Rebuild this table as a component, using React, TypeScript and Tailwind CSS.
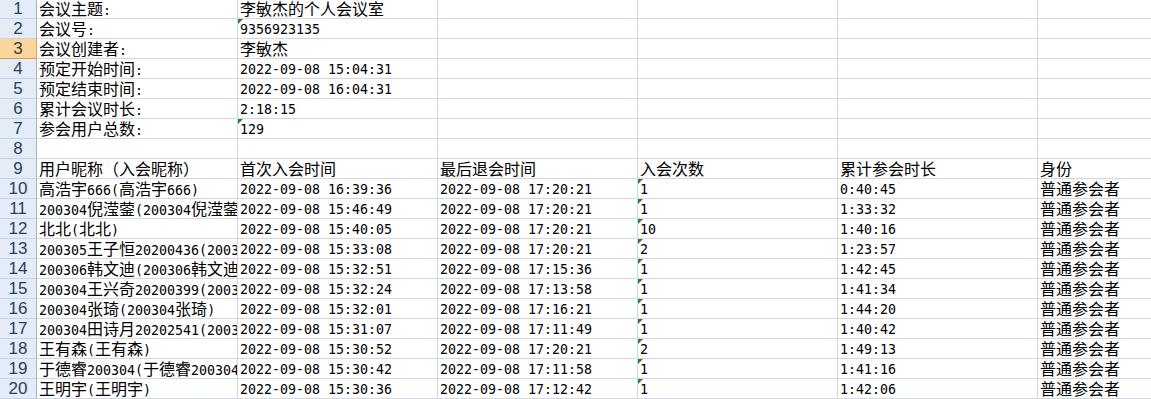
const head = ['用户昵称（入会昵称）', '首次入会时间', '最后退会时间', '入会次数', '累计参会时长', '身份'];

type Row = { cells: string[]; marks?: number[] };

const people: [string, string, string, string, string][] = [
  ['高浩宇666(高浩宇666)', '16:39:36', '17:20:21', '1', '0:40:45'],
  ['200304倪滢蓥(200304倪滢蓥)', '15:46:49', '17:20:21', '1', '1:33:32'],
  ['北北(北北)', '15:40:05', '17:20:21', '10', '1:40:16'],
  ['200305王子恒20200436(200305王子恒20200436)', '15:33:08', '17:20:21', '2', '1:23:57'],
  ['200306韩文迪(200306韩文迪)', '15:32:51', '17:15:36', '1', '1:42:45'],
  ['200304王兴奇20200399(200304王兴奇20200399)', '15:32:24', '17:13:58', '1', '1:41:34'],
  ['200304张琦(200304张琦)', '15:32:01', '17:16:21', '1', '1:44:20'],
  ['200304田诗月20202541(200304田诗月20202541)', '15:31:07', '17:11:49', '1', '1:40:42'],
  ['王有森(王有森)', '15:30:52', '17:20:21', '2', '1:49:13'],
  ['于德睿200304(于德睿200304)', '15:30:42', '17:11:58', '1', '1:41:16'],
  ['王明宇(王明宇)', '15:30:36', '17:12:42', '1', '1:42:06'],
];

const rows: Row[] = [
  { cells: ['会议主题:', '李敏杰的个人会议室'] },
  { cells: ['会议号:', '9356923135'], marks: [1] },
  { cells: ['会议创建者:', '李敏杰'] },
  { cells: ['预定开始时间:', '2022-09-08 15:04:31'] },
  { cells: ['预定结束时间:', '2022-09-08 16:04:31'] },
  { cells: ['累计会议时长:', '2:18:15'] },
  { cells: ['参会用户总数:', '129'], marks: [1] },
  { cells: [] },
  { cells: head },
  ...people.map(([name, a, b, n, d]) => ({
    cells: [name, '2022-09-08 ' + a, '2022-09-08 ' + b, n, d, '普通参会者'],
    marks: [3],
  })),
];

const widths = ['w-[201px]', 'w-[200px]', 'w-[200px]', 'w-[200px]', 'w-[200px]', 'flex-1'];

// SimSun-ish: half-width ascii in a mono face, CJK at full em
function Txt({ s }: { s: string }) {
  const parts = s.split(/([\x00-\x7f]+)/).filter(Boolean);
  return (
    <>
      {parts.map((p, i) =>
        /^[\x00-\x7f]+$/.test(p) ? (
          <span key={i} className="font-['DejaVu_Sans_Mono',monospace] text-[13.3px] font-light">
            {p}
          </span>
        ) : (
          <span key={i} className="font-['Noto_Sans_CJK_SC',sans-serif] text-[16px]">
            {p}
          </span>
        )
      )}
    </>
  );
}

function Mark() {
  return (
    <svg className="absolute left-0 top-0" width="6" height="6" viewBox="0 0 6 6">
      <polygon points="0,0 5,0 0,5" fill="#1e8a1e" />
    </svg>
  );
}

export default function App() {
  return (
    <div className="w-[1151px] h-[399px] overflow-hidden bg-white text-black">
      <div className="-mt-px">
        {rows.map((r, ri) => {
          const sel = ri === 2;
          return (
            <div key={ri} className="flex h-[20px]">
              <div
                className={
                  sel
                    ? "w-[37px] shrink-0 flex items-center justify-center border-r border-r-[#f0a040] border-b border-b-[#f29436] bg-[#fbd69c] text-[#3a3a3a] font-['Liberation_Sans',sans-serif] text-[17px] leading-[19px]"
                    : "w-[37px] shrink-0 flex items-center justify-center border-r border-r-[#9eb6ce] border-b border-b-[#c5d3e6] bg-[#e4ecf7] text-[#27415f] font-['Liberation_Sans',sans-serif] text-[17px] leading-[19px]"
                }
              >
                {ri + 1}
              </div>
              {widths.map((w, ci) => (
                <div
                  key={ci}
                  className={`${w} relative shrink-0 overflow-hidden whitespace-nowrap border-b border-[#d0d7e5] ${
                    ci < 5 ? 'border-r' : ''
                  } pl-[2px] leading-[19px]`}
                >
                  {r.marks?.includes(ci) && <Mark />}
                  {r.cells[ci] ? <Txt s={r.cells[ci]} /> : null}
                </div>
              ))}
            </div>
          );
        })}
      </div>
    </div>
  );
}
